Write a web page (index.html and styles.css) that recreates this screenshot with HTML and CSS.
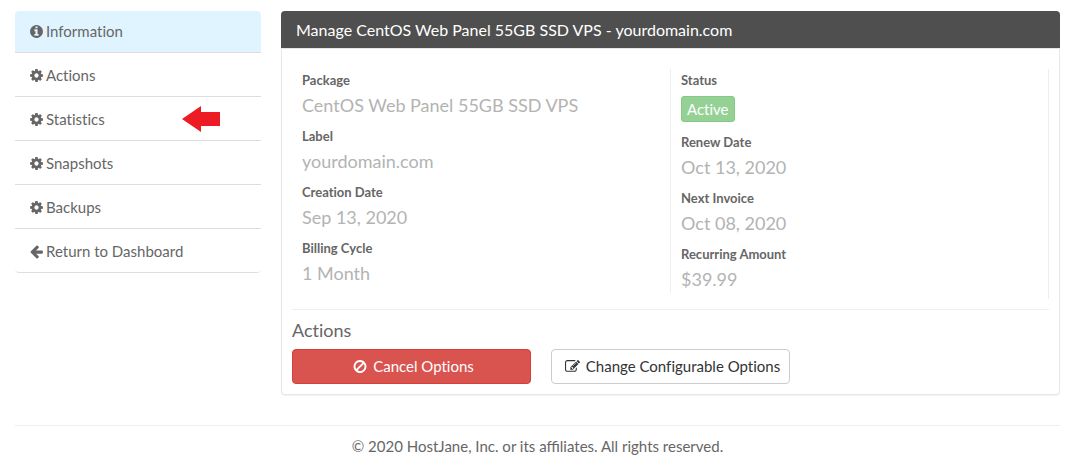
FILE: index.html
```html
<!DOCTYPE html>
<html lang="en">
<head>
    <meta charset="UTF-8">
    <meta name="viewport" content="width=device-width, initial-scale=1.0">
    <title>Manage Service - HostJane</title>
    <link rel="stylesheet" href="styles.css">
</head>
<body>

<!-- Icon set -->
<svg class="icon-defs" width="0" height="0" aria-hidden="true">
    <symbol id="icon-info" viewBox="128 0 1536 1792">
        <path d="M1152 1376v-160q0-14-9-23t-23-9h-96v-512q0-14-9-23t-23-9h-320q-14 0-23 9t-9 23v160q0 14 9 23t23 9h96v320h-96q-14 0-23 9t-9 23v160q0 14 9 23t23 9h448q14 0 23-9t9-23zm-128-896v-160q0-14-9-23t-23-9h-192q-14 0-23 9t-9 23v160q0 14 9 23t23 9h192q14 0 23-9t9-23zm640 416q0 209-103 385.500t-279.500 279.500-385.500 103-385.500-103-279.500-279.500-103-385.500 103-385.500 279.500-279.500 385.500-103 385.500 103 279.500 279.500 103 385.500z"/>
    </symbol>
    <symbol id="icon-cog" viewBox="128 0 1536 1792">
        <path d="M1152 896q0-106-75-181t-181-75-181 75-75 181 75 181 181 75 181-75 75-181zm512-109v222q0 12-8 23t-20 13l-185 28q-19 54-39 91 35 50 107 138 10 12 10 25t-9 23q-27 37-99 108t-94 71q-12 0-26-9l-138-108q-44 23-91 38-16 136-29 186-7 28-36 28h-222q-14 0-24.500-8.500t-11.500-21.500l-28-184q-49-16-90-37l-141 107q-10 9-25 9-14 0-25-11-126-114-165-168-7-10-7-23 0-12 8-23 15-21 51-66.500t54-70.500q-27-50-41-99l-183-27q-13-2-21-12.500t-8-23.500v-222q0-12 8-23t19-13l186-28q14-46 39-92-40-57-107-138-10-12-10-24 0-10 9-23 26-36 98.500-107.500t94.500-71.500q13 0 26 10l138 107q44-23 91-38 16-136 29-186 7-28 36-28h222q14 0 24.500 8.500t11.500 21.500l28 184q49 16 90 37l142-107q9-9 24-9 13 0 25 10 129 119 165 170 7 8 7 22 0 12-8 23-15 21-51 66.500t-54 70.500q26 50 41 98l183 28q13 2 21 12.500t8 23.500z"/>
    </symbol>
    <symbol id="icon-arrow-left" viewBox="128 0 1536 1792">
        <path d="M1664 896v128q0 53-32.500 90.500t-84.500 37.500h-704l293 294q38 36 38 90t-38 90l-75 76q-37 37-90 37-52 0-91-37l-651-652q-37-37-37-90 0-52 37-91l651-650q38-38 91-38 52 0 90 38l75 74q38 38 38 91t-38 91l-293 293h704q52 0 84.500 37.500t32.500 90.500z"/>
    </symbol>
    <symbol id="icon-ban" viewBox="128 0 1536 1792">
        <path d="M1440 893q0-161-87-295l-754 753q137 89 297 89 111 0 211.500-43.500t173.500-116.500 116-174.500 43-212.500zm-999 299l755-754q-135-91-300-91-148 0-273 73t-198 199-73 274q0 162 89 299zm1223-299q0 157-61 300t-163.500 246-245 164-298.500 61-298.500-61-245-164-163.500-246-61-300 61-299.500 163.500-245.500 245-164 298.500-61 298.500 61 245 164 163.500 245.500 61 299.500z"/>
    </symbol>
    <symbol id="icon-edit" viewBox="0 0 1792 1792">
        <path d="M888 1184l116-116-152-152-116 116v56h96v96h56zm440-720q-16-16-33 1l-350 350q-17 17-1 33t33-1l350-350q17-17 1-33zm80 594v190q0 119-84.500 203.500t-203.500 84.500h-832q-119 0-203.500-84.500t-84.500-203.500v-832q0-119 84.500-203.500t203.500-84.500h832q63 0 117 25 15 7 18 23 3 17-9 29l-49 49q-14 14-32 8-23-6-45-6h-832q-66 0-113 47t-47 113v832q0 66 47 113t113 47h832q66 0 113-47t47-113v-126q0-13 9-22l64-64q15-15 35-7t20 29zm-96-738l288 288-672 672h-288v-288zm444 132l-92 92-288-288 92-92q28-28 68-28t68 28l152 152q28 28 28 68t-28 68z"/>
    </symbol>
</svg>

<div class="layout">
    <nav class="sidebar">
        <a href="#" class="menu-link active"><svg class="icon"><use href="#icon-info"/></svg>Information</a>
        <a href="#" class="menu-link"><svg class="icon"><use href="#icon-cog"/></svg>Actions</a>
        <a href="#" class="menu-link"><svg class="icon"><use href="#icon-cog"/></svg>Statistics
            <svg class="pointer" viewBox="0 0 38 26"><path d="M0 13L19 0v6h19v14H19v6z"/></svg>
        </a>
        <a href="#" class="menu-link"><svg class="icon"><use href="#icon-cog"/></svg>Snapshots</a>
        <a href="#" class="menu-link"><svg class="icon"><use href="#icon-cog"/></svg>Backups</a>
        <a href="#" class="menu-link"><svg class="icon"><use href="#icon-arrow-left"/></svg>Return to Dashboard</a>
    </nav>

    <main class="panel">
        <h1 class="panel-heading">Manage CentOS Web Panel 55GB SSD VPS - yourdomain.com</h1>
        <div class="panel-body">
            <div class="details">
                <dl class="details-col">
                    <dt>Package</dt>
                    <dd>CentOS Web Panel 55GB SSD VPS</dd>
                    <dt>Label</dt>
                    <dd>yourdomain.com</dd>
                    <dt>Creation Date</dt>
                    <dd>Sep 13, 2020</dd>
                    <dt>Billing Cycle</dt>
                    <dd>1 Month</dd>
                </dl>
                <dl class="details-col">
                    <dt>Status</dt>
                    <dd class="status"><span class="badge">Active</span></dd>
                    <dt>Renew Date</dt>
                    <dd>Oct 13, 2020</dd>
                    <dt>Next Invoice</dt>
                    <dd>Oct 08, 2020</dd>
                    <dt>Recurring Amount</dt>
                    <dd>$39.99</dd>
                </dl>
            </div>
            <section class="actions">
                <h2>Actions</h2>
                <div class="buttons">
                    <button type="button" class="btn btn-danger"><svg class="icon"><use href="#icon-ban"/></svg>Cancel Options</button>
                    <button type="button" class="btn btn-default"><svg class="icon icon-wide"><use href="#icon-edit"/></svg>Change Configurable Options</button>
                </div>
            </section>
        </div>
    </main>
</div>

<footer class="footer">&copy; 2020 HostJane, Inc. or its affiliates. All rights reserved.</footer>

</body>
</html>
```
FILE: styles.css
```css
* {
    box-sizing: border-box;
}

body {
    margin: 0;
    padding: 11px 16px 0 15px;
    background-color: #fff;
    color: #666;
    font-family: Lato, "Liberation Sans", sans-serif;
    font-size: 15px;
    line-height: 22px;
    font-variant-ligatures: no-common-ligatures;
}

.icon-defs {
    position: absolute;
}

.icon {
    width: 13px;
    height: 15px;
    flex: none;
    fill: currentColor;
}

.layout {
    display: grid;
    grid-template-columns: 6fr 19fr;
    gap: 20px;
    align-items: start;
}

/* Sidebar menu */
.sidebar {
    border-radius: 4px;
    overflow: hidden;
}

.menu-link {
    display: flex;
    align-items: center;
    gap: 3px;
    padding: 11px 15px 10px;
    border-bottom: 1px solid #ddd;
    color: #666;
    text-decoration: none;
}

.menu-link.active {
    padding-top: 9px;
    background-color: #e0f4ff;
}

.menu-link:last-child {
    border-radius: 0 0 4px 4px;
}

.menu-link:hover {
    background-color: #e0f4ff;
}

.pointer {
    width: 38px;
    height: 26px;
    margin: -2px 26px -2px auto;
    fill: #ed1c24;
}

/* Main panel */
.panel {
    border: 1px solid #e7e7e7;
    border-top: 0;
    border-radius: 4px;
    box-shadow: 0 1px 1px rgba(0, 0, 0, 0.05);
}

.panel-heading {
    margin: 0 -1px;
    padding: 8px 15px 7px;
    background-color: #4f4f4f;
    border-radius: 4px 4px 0 0;
    color: #fff;
    font-size: 16px;
    font-weight: normal;
}

.panel-body {
    padding: 20px 10px 10px;
    border-top: 1px solid #e7e7e7;
}

.details {
    display: grid;
    grid-template-columns: 1fr 1fr;
    padding-bottom: 6px;
    border-right: 1px solid #eee;
}

.details-col {
    margin: 0;
    padding: 0 10px;
}

.details-col + .details-col {
    border-left: 1px solid #eee;
}

dt {
    font-size: 13px;
    font-weight: bold;
}

dd {
    margin: 0 0 6px;
    color: #b3b3b3;
    font-size: 18px;
    line-height: 28px;
}

dd:last-child {
    margin-bottom: 0;
}

.status {
    display: flex;
    align-items: center;
    height: 34px;
    padding-top: 2px;
}

.badge {
    padding: 1px 5px;
    background-color: #95d195;
    border: 1px solid #85c985;
    border-radius: 3px;
    color: #fff;
    font-size: 15px;
    line-height: 22px;
}

.actions {
    margin-top: 10px;
    padding-top: 9px;
    border-top: 1px solid #eee;
}

.actions h2 {
    margin: 0 0 8px;
    font-size: 18px;
    font-weight: normal;
}

.buttons {
    display: grid;
    grid-template-columns: repeat(3, 1fr);
    gap: 20px;
}

.btn {
    display: flex;
    align-items: center;
    justify-content: center;
    gap: 6px;
    padding: 6px 8px 6px 12px;
    border: 1px solid #ccc;
    border-radius: 4px;
    font-family: inherit;
    font-size: 15px;
    font-variant-ligatures: inherit;
    line-height: 21px;
    white-space: nowrap;
    cursor: pointer;
}

.btn .icon {
    width: 14px;
}

.btn .icon-wide {
    width: 15px;
}

.btn-danger {
    background-color: #d9534f;
    border-color: #d43f3a;
    color: #fff;
}

.btn-default {
    background-color: #fff;
    color: #333;
}

.btn:hover {
    opacity: 0.9;
}

/* Footer */
.footer {
    margin-top: 30px;
    padding: 9px 0;
    border-top: 1px solid #eee;
    text-align: center;
    font-variant-ligatures: normal;
}
```
